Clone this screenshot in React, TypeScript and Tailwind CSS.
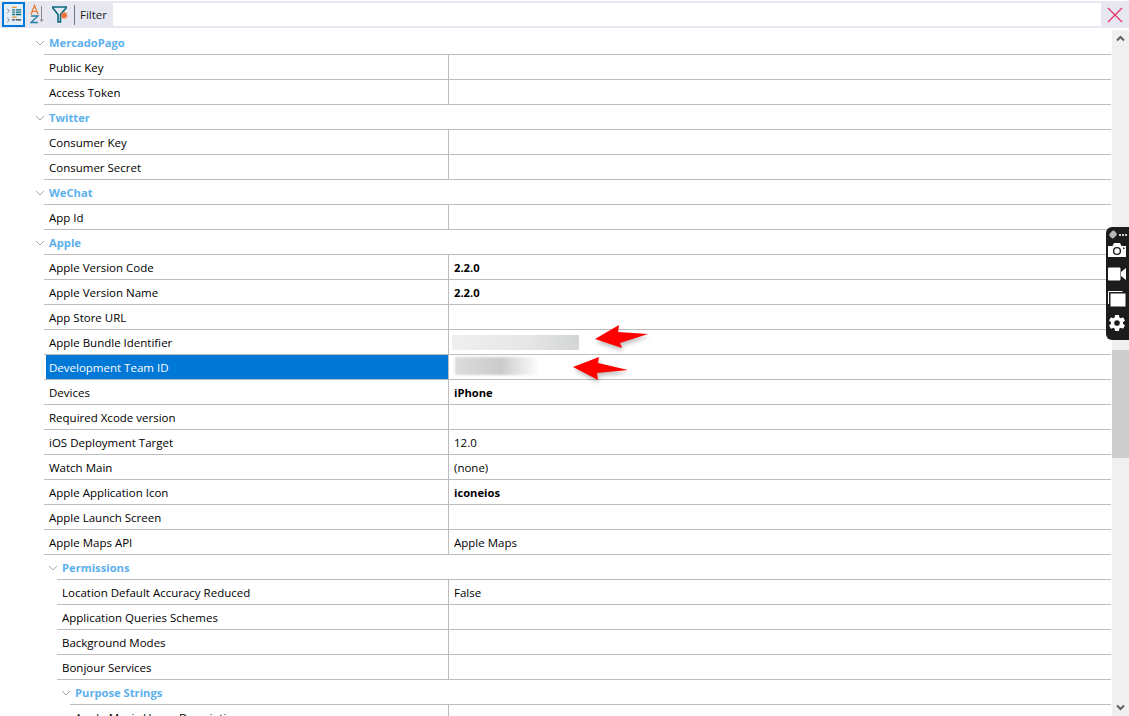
import { IoSettingsSharp } from 'react-icons/io5';

type Item =
  | { kind: 'group'; label: string; level: number }
  | { kind: 'row'; label: string; value?: string; bold?: boolean; level: number; selected?: boolean; blur?: 'bundle' | 'team' };

const items: Item[] = [
  { kind: 'group', label: 'MercadoPago', level: 0 },
  { kind: 'row', label: 'Public Key', level: 0 },
  { kind: 'row', label: 'Access Token', level: 0 },
  { kind: 'group', label: 'Twitter', level: 0 },
  { kind: 'row', label: 'Consumer Key', level: 0 },
  { kind: 'row', label: 'Consumer Secret', level: 0 },
  { kind: 'group', label: 'WeChat', level: 0 },
  { kind: 'row', label: 'App Id', level: 0 },
  { kind: 'group', label: 'Apple', level: 0 },
  { kind: 'row', label: 'Apple Version Code', value: '2.2.0', bold: true, level: 0 },
  { kind: 'row', label: 'Apple Version Name', value: '2.2.0', bold: true, level: 0 },
  { kind: 'row', label: 'App Store URL', level: 0 },
  { kind: 'row', label: 'Apple Bundle Identifier', level: 0, blur: 'bundle' },
  { kind: 'row', label: 'Development Team ID', level: 0, selected: true, blur: 'team' },
  { kind: 'row', label: 'Devices', value: 'iPhone', bold: true, level: 0 },
  { kind: 'row', label: 'Required Xcode version', level: 0 },
  { kind: 'row', label: 'iOS Deployment Target', value: '12.0', level: 0 },
  { kind: 'row', label: 'Watch Main', value: '(none)', level: 0 },
  { kind: 'row', label: 'Apple Application Icon', value: 'iconeios', bold: true, level: 0 },
  { kind: 'row', label: 'Apple Launch Screen', level: 0 },
  { kind: 'row', label: 'Apple Maps API', value: 'Apple Maps', level: 0 },
  { kind: 'group', label: 'Permissions', level: 1 },
  { kind: 'row', label: 'Location Default Accuracy Reduced', value: 'False', level: 1 },
  { kind: 'row', label: 'Application Queries Schemes', level: 1 },
  { kind: 'row', label: 'Background Modes', level: 1 },
  { kind: 'row', label: 'Bonjour Services', level: 1 },
  { kind: 'group', label: 'Purpose Strings', level: 2 },
  { kind: 'row', label: 'Apple Music Usage Description', level: 2 },
];

const indents = ['w-[44px]', 'w-[57px]', 'w-[70px]'];
const nameWidths = ['w-[404px]', 'w-[391px]', 'w-[378px]'];

function Chevron() {
  return (
    <svg width="10" height="6" viewBox="0 0 10 6" className="absolute left-[-9px] top-[10px]">
      <path d="M1 1l4 4 4-4" fill="none" stroke="#a8a8a8" strokeWidth="1" />
    </svg>
  );
}

function PropertyRow({ item }: { item: Item }) {
  if (item.kind === 'group') {
    return (
      <div className="flex h-[25px]">
        <div className={`${indents[item.level]} shrink-0`} />
        <div className="relative flex-1 border-b border-[#bdbdbd] pl-[5px] pt-[4px] text-[11.2px] leading-[17px] font-bold text-[#5cb0ee]">
          <Chevron />
          {item.label}
        </div>
      </div>
    );
  }

  return (
    <div className="flex h-[25px]">
      <div className={`${indents[item.level]} shrink-0`} />
      <div className="flex flex-1 border-b border-[#bdbdbd]">
        <div className={`${nameWidths[item.level]} shrink-0 pl-[5px] pt-[4px] leading-[17px] ${item.selected ? 'bg-[#0078d7] text-white ml-[2px] !w-[402px] !pl-[3px]' : 'text-black'}`}>
          {item.label}
        </div>
        <div className="flex-1 border-l border-[#bdbdbd] pl-[5px] pt-[4px] leading-[17px] text-black">
          {item.blur === 'bundle' && <div className="ml-[-2px] mt-[1px] h-[15px] w-[127px] bg-gradient-to-r from-[#efefef] via-[#e6e6e6] via-60% to-[#d3d5d6] blur-[0.6px]" />}
          {item.blur === 'team' && <div className="mt-[-2px] ml-[1px] h-[18px] w-[84px] bg-gradient-to-r from-[#dcdcdc] via-[#cbcbcb] via-55% to-[#ffffff] blur-[0.8px]" />}
          {item.value && <span className={item.bold ? 'text-[11.2px] font-bold' : ''}>{item.value}</span>}
        </div>
      </div>
    </div>
  );
}

function CategorizedIcon() {
  return (
    <svg width="21" height="23" viewBox="0 0 21 23">
      <path d="M3.5 5l2.5 2.5L3.5 10M3.5 15l2.5 2.5L3.5 20" fill="none" stroke="#7a7a7a" strokeWidth="1" />
      <path d="M9 3.5h5M9 14.5h5" stroke="#e8912c" strokeWidth="1.4" />
      <path d="M9 6.5h3M13 6.5h6M9 9h3M13 9h6M9 11.5h3M13 11.5h6" stroke="#0a6a78" strokeWidth="1.4" />
      <path d="M9 17.5h3M13 17.5h6" stroke="#2a3a44" strokeWidth="1.4" />
    </svg>
  );
}

function SortIcon() {
  return (
    <svg width="16" height="24" viewBox="0 0 16 24">
      <path d="M1 11.5L4.5 2.5 8 11.5M2.3 8.5h4.4" fill="none" stroke="#e8792c" strokeWidth="1.2" />
      <path d="M1 13h7L1 19.5h7" fill="none" stroke="#2a7fa8" strokeWidth="1.3" />
      <path d="M11.5 3v15" stroke="#8a8a8a" strokeWidth="1" />
      <path d="M9.5 16.5h4l-2 2.5z" fill="#8a8a8a" />
    </svg>
  );
}

function FilterIcon() {
  return (
    <svg width="18" height="20" viewBox="0 0 18 20">
      <path d="M1 2h15M1.5 2.5L7 9.5V17h2.5V9.5L15.5 2.5" fill="none" stroke="#0a6a78" strokeWidth="1.6" />
      <path d="M13 6l1 2.2 2.2-.6-.8 2.2 1.8 1.4-2.3.6.1 2.3-2-1.3-1.9 1.3.1-2.3-2-.8 1.9-1.2-.6-2.2 2.2.6z" fill="#f0703a" />
    </svg>
  );
}

function CameraIcon() {
  return (
    <svg width="18" height="14" viewBox="0 0 18 14">
      <path d="M0 3h4.5L6 0h6l1.5 3H18v11H0z" fill="#fff" />
      <circle cx="9" cy="8" r="3.4" fill="#fff" stroke="#1c1c1c" strokeWidth="1.4" />
      <rect x="15" y="4.5" width="1.5" height="1.5" fill="#1c1c1c" />
    </svg>
  );
}

function VideoIcon() {
  return (
    <svg width="18" height="14" viewBox="0 0 18 14">
      <rect x="0" y="0.5" width="12.5" height="13" rx="1" fill="#fff" />
      <path d="M13 5l5-4v12l-5-4z" fill="#fff" />
    </svg>
  );
}

function WindowsIcon() {
  return (
    <svg width="18" height="16" viewBox="0 0 18 16">
      <path d="M0.5 13V0.5h14" fill="none" stroke="#fff" strokeWidth="1" />
      <rect x="2.5" y="2.5" width="15" height="13" fill="#fff" />
    </svg>
  );
}

function Arrow({ points, className }: { points: string; className: string }) {
  return (
    <svg width="64" height="34" viewBox="0 0 64 34" className={`absolute ${className} drop-shadow-[1px_3px_2px_rgba(0,0,0,0.25)]`}>
      <polygon points={points} fill="#fe0000" />
    </svg>
  );
}

export default function App() {
  return (
    <div className="relative h-[716px] w-[1129px] overflow-hidden bg-white font-['Open_Sans',sans-serif] text-[11.5px]">
      <div className="flex h-[27px] mt-[1px] items-center bg-[#e6e7f0] pl-[2px] pr-[6px]">
        <div className="flex h-[25px] w-[23px] items-center justify-center border-2 border-[#0078d7] bg-[#e2eef8]">
          <CategorizedIcon />
        </div>
        <div className="ml-[5px] flex w-[16px] justify-center"><SortIcon /></div>
        <div className="ml-[5px] flex w-[18px] justify-center"><FilterIcon /></div>
        <div className="ml-[5px] h-[20px] w-px bg-[#6f7480]" />
        <span className="ml-[5px] w-[33px] text-[#1a1a1a]">Filter</span>
        <div className="h-[23px] flex-1 bg-white" />
        <svg width="16" height="16" viewBox="0 0 16 16" className="ml-[6px]">
          <path d="M1 1l14 14M15 1L1 15" stroke="#e8336a" strokeWidth="1.3" />
        </svg>
      </div>

      <div className="mt-[2px] flex h-[686px]">
        <div className="flex-1 overflow-hidden">
          {items.map((item) => (
            <PropertyRow key={item.label} item={item} />
          ))}
        </div>
        <div className="flex w-[17px] flex-col bg-[#f0f0f0] ml-px">
          <div className="flex h-[17px] items-center justify-center">
            <svg width="9" height="7" viewBox="0 0 9 7"><path d="M1 5.5l3.5-3.5L8 5.5" fill="none" stroke="#606060" strokeWidth="2" /></svg>
          </div>
          <div className="mt-[303px] h-[108px] bg-[#cdcdcd]" />
          <div className="flex-1" />
          <div className="flex h-[17px] items-center justify-center">
            <svg width="9" height="7" viewBox="0 0 9 7"><path d="M1 1.5l3.5 3.5L8 1.5" fill="none" stroke="#606060" strokeWidth="2" /></svg>
          </div>
        </div>
      </div>

      <Arrow className="left-[590px] top-[320px]" points="5,19 29,5 28,12 58,14 30,23 32,28" />
      <Arrow className="left-[568px] top-[350px]" points="5,17 31,7 30,13 60,20 29,23 30,30" />

      <div className="absolute left-[1106px] top-[227px] flex h-[113px] w-[23px] flex-col items-center rounded-l-[6px] bg-[#1c1c1c] pt-[3px] pr-[1px] text-white">
        <div className="flex h-[9px] w-full items-center gap-[1px] pl-[4px]">
          <div className="h-[7px] w-[6px] rotate-45 rounded-[2px] bg-[#b8b8b8]" />
          <div className="ml-[2px] h-[2px] w-[2px] bg-[#cfcfcf]" />
          <div className="h-[2px] w-[2px] bg-[#cfcfcf]" />
          <div className="h-[2px] w-[2px] bg-[#cfcfcf]" />
        </div>
        <div className="mt-[4px]"><CameraIcon /></div>
        <div className="mt-[10px]"><VideoIcon /></div>
        <div className="mt-[10px]"><WindowsIcon /></div>
        <IoSettingsSharp size={18} className="mt-[7px]" />
      </div>
    </div>
  );
}
